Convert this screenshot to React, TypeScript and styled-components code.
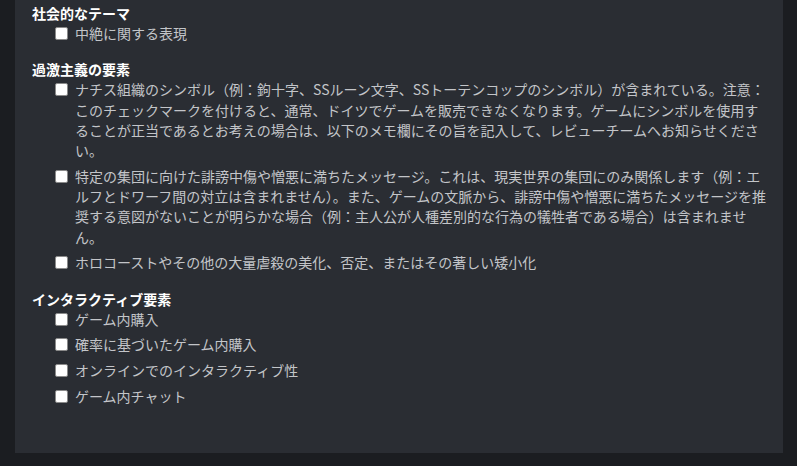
import React from 'react'
import styled, {createGlobalStyle} from "styled-components"

const GlobalStyle = createGlobalStyle`
    html, body {
        margin: 0;
        padding: 0;
        background-color: #1b1d21;
    }
    body {
        font-family: 'Noto Sans CJK JP', 'Noto Sans', sans-serif;
    }
`

type Section = { title: string, items: string[] }

const sections: Section[] = [
    {
        title: "社会的なテーマ",
        items: ["中絶に関する表現"]
    },
    {
        title: "過激主義の要素",
        items: [
            "ナチス組織のシンボル（例：鉤十字、SSルーン文字、SSトーテンコップのシンボル）が含まれている。注意：このチェックマークを付けると、通常、ドイツでゲームを販売できなくなります。ゲームにシンボルを使用することが正当であるとお考えの場合は、以下のメモ欄にその旨を記入して、レビューチームへお知らせください。",
            "特定の集団に向けた誹謗中傷や憎悪に満ちたメッセージ。これは、現実世界の集団にのみ関係します（例：エルフとドワーフ間の対立は含まれません）。また、ゲームの文脈から、誹謗中傷や憎悪に満ちたメッセージを推奨する意図がないことが明らかな場合（例：主人公が人種差別的な行為の犠牲者である場合）は含まれません。",
            "ホロコーストやその他の大量虐殺の美化、否定、またはその著しい矮小化"
        ]
    },
    {
        title: "インタラクティブ要素",
        items: ["ゲーム内購入", "確率に基づいたゲーム内購入", "オンラインでのインタラクティブ性", "ゲーム内チャット"]
    }
]

function App() {
    return (
        <Page>
            <GlobalStyle/>
            <Panel>
                {sections.map(section => (
                    <Group key={section.title}>
                        <Heading>{section.title}</Heading>
                        <List>
                            {section.items.map(item => (
                                <Item key={item}>
                                    <Check type="checkbox"/>
                                    <Label>{item}</Label>
                                </Item>
                            ))}
                        </List>
                    </Group>
                ))}
            </Panel>
        </Page>
    )
}

export default App

const Page = styled.div`
    padding: 0 14px 12px 15px;
    background-color: #1b1d21;
`

const Panel = styled.div`
    background-color: #2a2d33;
    padding: 3px 11px 47px 17px;
    display: flex;
    flex-direction: column;
    gap: 16px;
`

const Group = styled.div`
    display: flex;
    flex-direction: column;
`

const Heading = styled.div`
    color: #ffffff;
    font-size: 14px;
    font-weight: bold;
    line-height: 20px;
`

const List = styled.div`
    display: flex;
    flex-direction: column;
    gap: 5.4px;
    padding-left: 23px;
`

const Item = styled.label`
    display: flex;
    align-items: flex-start;
    gap: 7px;
`

const Check = styled.input`
    appearance: none;
    flex: none;
    width: 13px;
    height: 13px;
    margin: 4px 0 0 0;
    background: #ffffff;
    border: 1px solid #8a8a8a;
    border-radius: 2px;
`

const Label = styled.span`
    color: #c3c5c9;
    font-size: 14px;
    line-height: 20.3px;
    max-width: 697px;
`
